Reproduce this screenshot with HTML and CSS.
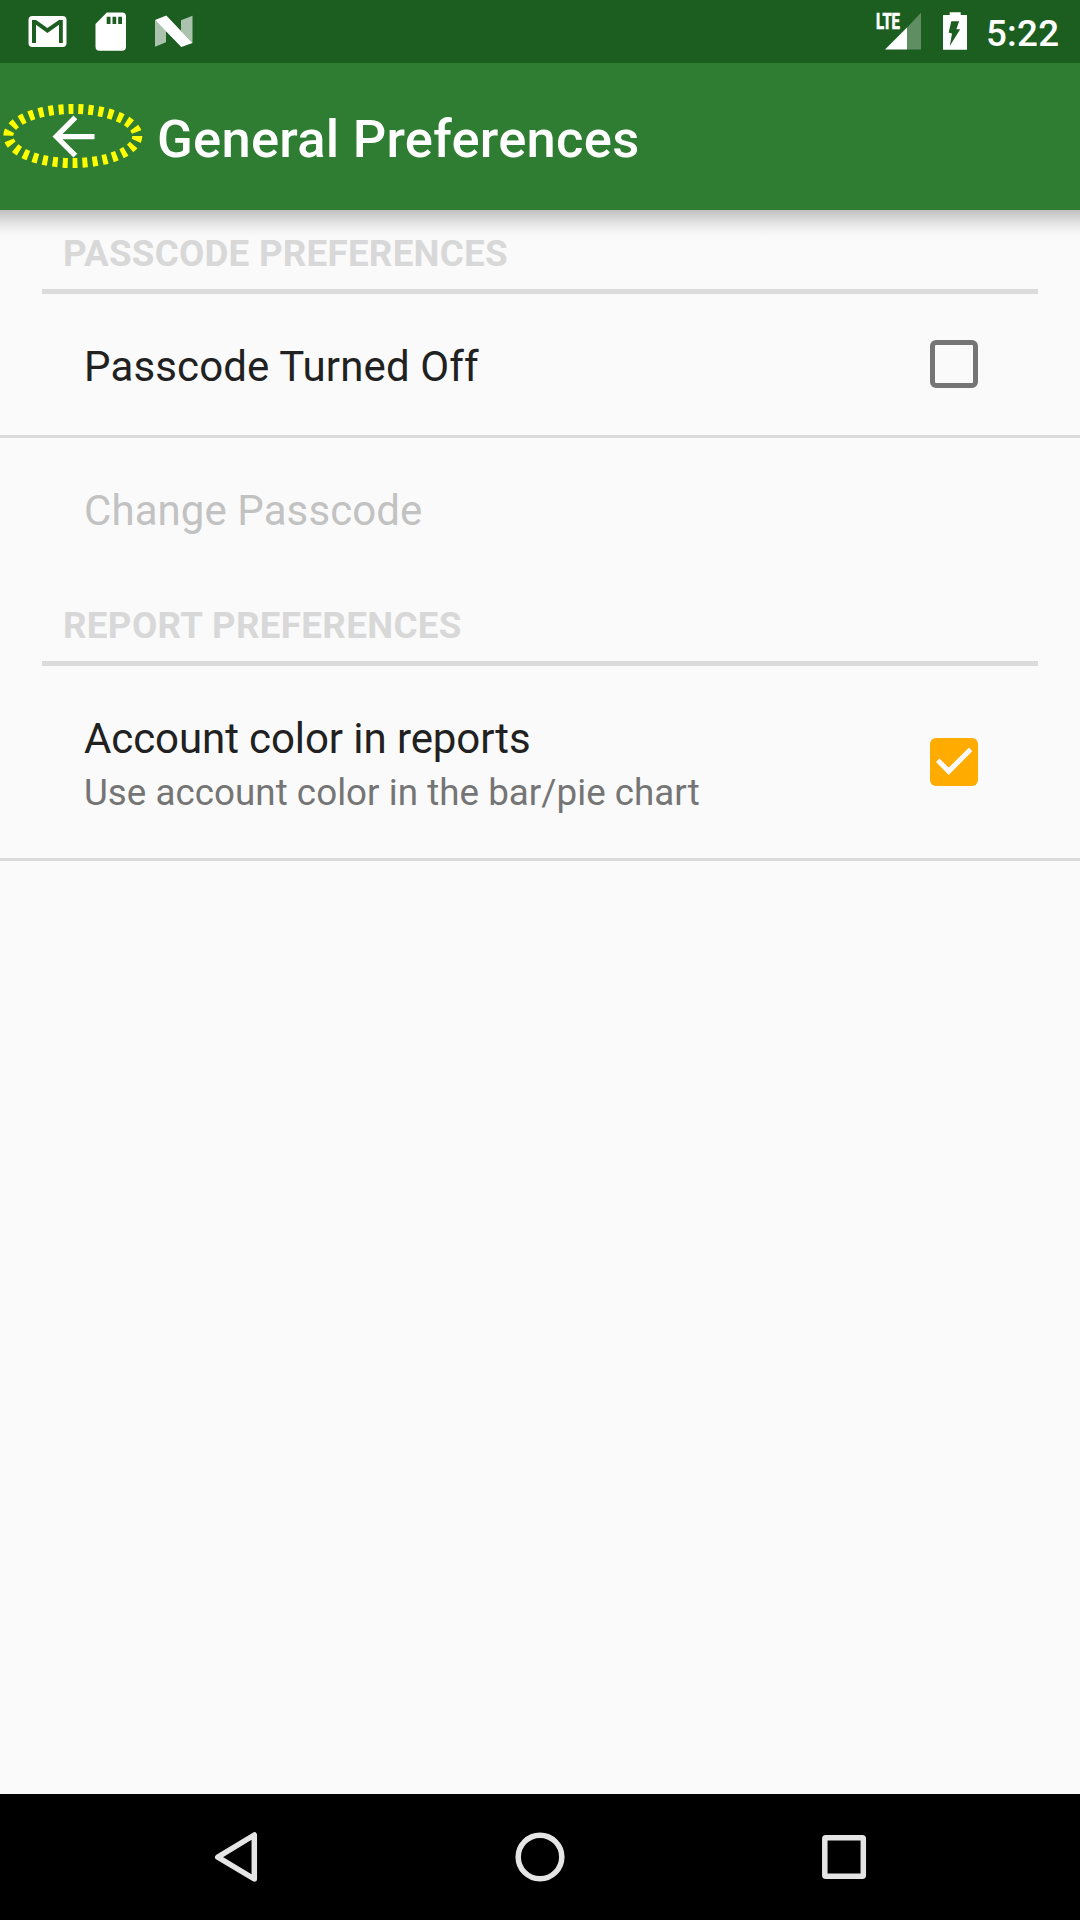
FILE: index.html
```html
<!DOCTYPE html>
<html lang="en">
<head>
<meta charset="utf-8">
<title>General Preferences</title>
<link rel="stylesheet" href="styles.css">
</head>
<body>
<div class="screen">
  <div class="status-bar">
    <svg class="status-icons" width="220" height="63" viewBox="0 0 220 63" aria-hidden="true">
      <rect x="28.5" y="16" width="38" height="31" rx="4" fill="#fff"/>
      <path class="cutout" d="M32 20h4l11.400 8L59 20h3.800v23H59V24.700L47.400 33 36 24.700V43h-4z"/>
      <path fill="#fff" d="M106.800 12.500H122a4 4 0 0 1 4 4v30.200a4 4 0 0 1-4 4H99.500a4 4 0 0 1-4-4V24z"/>
      <path class="cutout" d="M106.700 16.700h3.800v7.300h-3.800zM112.500 16.700h3.700v7.300h-3.700zM118.200 16.700h3.800v7.300h-3.800z"/>
      <path fill="#fff" fill-opacity=".63" d="M155 20l11 11v11.200l-11 4.500zM181 20.300l11.500-4.500V43L181 31z"/>
      <path fill="#fff" d="M155 20l11.300-4.500L192.500 43l-11.200 4z"/>
    </svg>
    <div class="status-right">
      <svg width="114" height="63" viewBox="872 0 114 63" aria-hidden="true">
        <text class="lte" x="876" y="29" textLength="24" lengthAdjust="spacingAndGlyphs">LTE</text>
        <path fill="#fff" d="M885 49.400l22-22v22z"/>
        <path fill="#fff" fill-opacity=".3" d="M907 27.400l14-14.600v36.600h-14z"/>
        <path fill="#fff" d="M949.700 12.300h11V15h6.300v34.700h-24V15h6.700z"/>
        <path class="cutout" d="M951.300 21.300h7.800l-2.700 8h3.800L949.800 46l2.200-12.600-3.300-.8z"/>
      </svg>
      <span class="clock">5:22</span>
    </div>
  </div>
  <header class="app-bar">
    <svg class="back" width="157" height="147" viewBox="0 63 157 147" role="img" aria-label="Navigate up">
      <ellipse class="highlight" cx="72.800" cy="136" rx="64.500" ry="27"/>
      <path fill="#fff" transform="translate(42 105) scale(2.625)" d="M20 11H7.830l5.590-5.590L12 4l-8 8 8 8 1.410-1.410L7.830 13H20z"/>
    </svg>
    <h1 class="title">General Preferences</h1>
  </header>
  <main class="content">
    <h2 class="section">PASSCODE PREFERENCES</h2>
    <div class="row divided">
      <div class="label spaced">Passcode Turned Off</div>
      <span class="checkbox"></span>
    </div>
    <div class="row disabled">
      <div class="label">Change Passcode</div>
    </div>
    <h2 class="section report">REPORT PREFERENCES</h2>
    <div class="row tall divided">
      <div class="label tight">Account color in reports
        <div class="summary">Use account color in the bar/pie chart</div>
      </div>
      <span class="checkbox checked">
        <svg width="48" height="48" viewBox="0 0 48 48" aria-hidden="true"><path fill="#fafafa" d="M6 24l3.400-3.400 9.300 9 20.300-20 3.300 3.600L18.700 37z"/></svg>
      </span>
    </div>
  </main>
  <nav class="nav-bar">
    <svg width="1080" height="126" viewBox="0 1794 1080 126" aria-hidden="true">
      <path d="M217.800 1857.200L254.300 1835v44z"/>
      <circle cx="540" cy="1857" r="21.800"/>
      <rect x="824.800" y="1837.800" width="38.500" height="38.500" rx="1"/>
    </svg>
  </nav>
</div>
</body>
</html>
```
FILE: styles.css
```css
* { box-sizing: border-box; }
body { margin: 0; background: #fafafa; font-family: Roboto, "Noto Sans", sans-serif; }
svg { display: block; }
h1, h2 { margin: 0; }

.screen { width: 1080px; height: 1920px; display: flex; flex-direction: column; }

.status-bar { height: 63px; display: flex; justify-content: space-between; background: #1b5e20; color: #fff; }
.cutout { fill: #1b5e20; }
.status-right { display: flex; padding-right: 20.500px; }
.lte { font-size: 21.500px; font-weight: 700; fill: #fff; stroke: #fff; stroke-width: .7px; }
.clock { padding-top: 12px; font-size: 36.750px; line-height: 43px; font-weight: 500; letter-spacing: .3px; }

.app-bar { position: relative; height: 147px; display: flex; background: #2e7d32; color: #fff; }
.app-bar::after {
  content: "";
  position: absolute;
  top: 100%;
  left: 0;
  right: 0;
  height: 28px;
  background: linear-gradient(rgba(0,0,0,.23), rgba(0,0,0,.15) 28%, rgba(0,0,0,.07) 55%, rgba(0,0,0,.02) 80%, transparent);
}
.highlight { fill: none; stroke: #ff0; stroke-width: 10; stroke-dasharray: 5 5; }
.title { padding-top: 45px; font-size: 52.500px; line-height: 62px; font-weight: 500; letter-spacing: .27px; }

.content { flex: 1; }
.section {
  height: 84px;
  margin: 0 42px;
  padding: 22px 21px 0;
  border-bottom: 5px solid #dbdbdb;
  color: #d8d8d8;
  font-size: 36.750px;
  line-height: 43px;
  font-weight: 700;
  letter-spacing: .24px;
}
.section.report { letter-spacing: .33px; }
.row { height: 144px; display: flex; align-items: center; justify-content: space-between; padding: 0 102px 0 84px; }
.row.tall { height: 195px; }
.row.divided { border-bottom: 3px solid #dadada; }
.label { align-self: flex-start; padding-top: 48px; color: #212121; font-size: 42px; line-height: 50px; }
.label.spaced { letter-spacing: .14px; }
.label.tight { letter-spacing: -.09px; }
.disabled .label { color: #c2c2c2; letter-spacing: .08px; }
.summary { margin-top: 7px; color: #757575; font-size: 36.750px; line-height: 43px; letter-spacing: .03px; }
.checkbox { width: 48px; height: 48px; margin-bottom: 1px; border: 5px solid #757575; border-radius: 6px; }
.checkbox.checked { margin-bottom: 0; border: 0; background: #ffab00; }

.nav-bar { height: 126px; background: #000; }
.nav-bar svg { fill: none; stroke: #e5e5e5; stroke-width: 5.500; stroke-linejoin: round; }
```
